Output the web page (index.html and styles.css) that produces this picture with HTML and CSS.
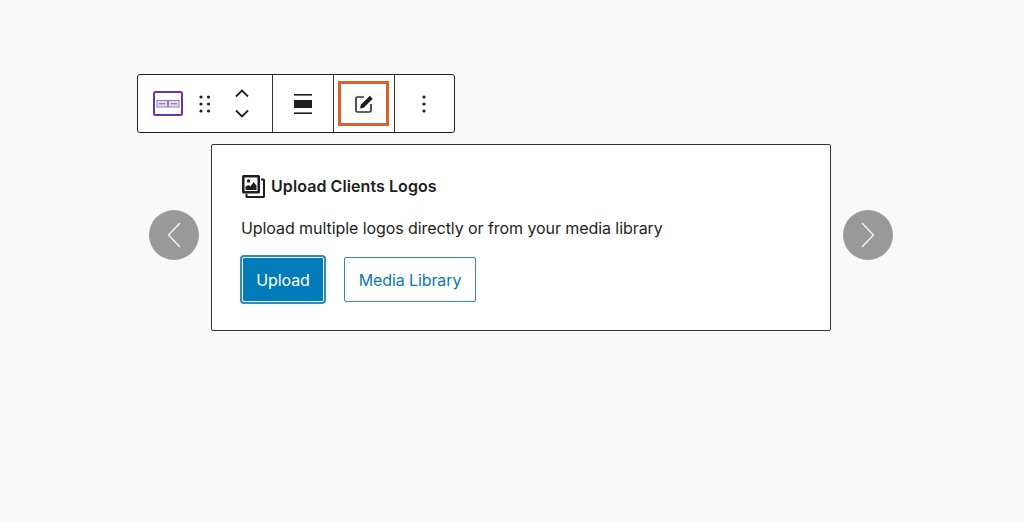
FILE: index.html
```html
<!DOCTYPE html>
<html lang="en">
<head>
    <meta charset="UTF-8">
    <title>Upload Clients Logos</title>
    <link rel="stylesheet" href="styles.css">
</head>
<body>
<div class="toolbar">
    <div class="tool-group tool-group-block">
        <svg class="icon-block" width="30" height="25" viewBox="0 0 30 25">
            <rect x="1" y="1" width="28" height="23" rx="1.500" fill="none" stroke="#6a34b0" stroke-width="2"/>
            <rect x="4" y="9.500" width="10.500" height="6.500" fill="#e3dcec" stroke="#8f7db0"/>
            <rect x="15.500" y="9.500" width="10.500" height="6.500" fill="#e3dcec" stroke="#8f7db0"/>
            <path d="M6 12.800h6.500M17.500 12.800h6.500" stroke="#7d68a8"/>
        </svg>
        <svg class="icon-drag" width="12" height="18" viewBox="0 0 12 18" fill="#1e1e1e">
            <circle cx="2" cy="2" r="1.600"/><circle cx="9.500" cy="2" r="1.600"/>
            <circle cx="2" cy="9" r="1.600"/><circle cx="9.500" cy="9" r="1.600"/>
            <circle cx="2" cy="16" r="1.600"/><circle cx="9.500" cy="16" r="1.600"/>
        </svg>
        <div class="movers">
            <svg width="14" height="9" viewBox="0 0 14 9"><path d="M1 7.500l6-6 6 6" fill="none" stroke="#1e1e1e" stroke-width="1.800"/></svg>
            <svg width="14" height="9" viewBox="0 0 14 9"><path d="M1 1.500l6 6 6-6" fill="none" stroke="#1e1e1e" stroke-width="1.800"/></svg>
        </div>
    </div>
    <div class="tool-group">
        <svg width="18" height="20" viewBox="0 0 18 20" fill="#1e1e1e">
            <rect x="0" y="0" width="18" height="1.600"/>
            <rect x="0" y="6" width="18" height="8"/>
            <rect x="0" y="18.400" width="18" height="1.600"/>
        </svg>
    </div>
    <div class="tool-group">
        <div class="edit-highlight">
            <svg width="20" height="20" viewBox="0 0 20 20" fill="none">
                <path d="M10 3H3.500A1.500 1.500 0 0 0 2 4.500v12A1.500 1.500 0 0 0 3.500 18h12a1.500 1.500 0 0 0 1.500-1.500V10" stroke="#333" stroke-width="1.700"/>
                <path d="M6 14.500l.8-3.700L15.800 1.800l2.900 2.900-9 9z" fill="#1e1e1e"/>
            </svg>
        </div>
    </div>
    <div class="tool-group tool-group-last">
        <svg width="4" height="18" viewBox="0 0 4 18" fill="#1e1e1e">
            <circle cx="2" cy="2" r="1.600"/><circle cx="2" cy="9" r="1.600"/><circle cx="2" cy="16" r="1.600"/>
        </svg>
    </div>
</div>

<div class="carousel">
    <div class="arrow">
        <svg width="14" height="26" viewBox="0 0 14 26"><path d="M13 1L1.500 13 13 25" fill="none" stroke="#f2f2f2" stroke-width="1.500"/></svg>
    </div>
    <div class="placeholder">
        <div class="placeholder-title">
            <svg class="icon-logos" width="23" height="23" viewBox="0 0 23 23">
                <path d="M19 4.500h2.500a.5.500 0 0 1 .5.500V21.500a.5.500 0 0 1-.5.500H5a.5.500 0 0 1-.5-.500V19" fill="none" stroke="#1e1e1e" stroke-width="2"/>
                <rect x="0" y="0" width="18" height="18.500" rx="1.500" fill="#1e1e1e"/>
                <path d="M2.500 16V2.500h13V16z" fill="#fff"/>
                <circle cx="6.500" cy="6" r="1.700" fill="#1e1e1e"/>
                <path d="M3.500 15v-3.500l3-1.500 2 1.500 3-4.500 3 3.500V15z" fill="#1e1e1e"/>
            </svg>
            <strong>Upload Clients Logos</strong>
        </div>
        <p class="placeholder-text">Upload multiple logos directly or from your media library</p>
        <div class="placeholder-buttons">
            <button class="btn btn-primary">Upload</button>
            <button class="btn btn-secondary">Media Library</button>
        </div>
    </div>
    <div class="arrow">
        <svg width="14" height="26" viewBox="0 0 14 26"><path d="M1 1l11.500 12L1 25" fill="none" stroke="#f2f2f2" stroke-width="1.500"/></svg>
    </div>
</div>
</body>
</html>
```

FILE: styles.css
```css
/* reset */
body,div,p,button{margin:0;padding:0}
html,body{width:100%;height:100%}
body{
    background:#f9f9f9;
    font-family:Inter,'Liberation Sans',sans-serif;
    font-size:16px;
    color:#1e1e1e;
    padding-top:74px;
    box-sizing:border-box;
    overflow:hidden;
}
/* //reset */
.toolbar{
    display:flex;
    width:318px;
    height:59px;
    margin-left:137px;
    box-sizing:border-box;
    background:#fff;
    border:1px solid #1e1e1e;
    border-radius:3px;
}
.tool-group{
    display:flex;
    flex:none;
    width:61px;
    align-items:center;
    justify-content:center;
    box-sizing:border-box;
    border-left:1px solid #333;
}
.tool-group-block{
    width:134px;
    border-left:0;
    justify-content:flex-start;
    padding-left:15px;
}
.tool-group-last{
    flex:1;
    width:auto;
    padding-right:1px;
}
.icon-block{
    margin-right:16px;
}
.icon-drag{
    margin-right:24px;
}
.movers{
    display:flex;
    flex-direction:column;
    gap:11px;
}
.edit-highlight{
    display:flex;
    width:51px;
    height:45px;
    margin-right:1px;
    align-items:center;
    justify-content:center;
    box-sizing:border-box;
    border:3px solid #d8622a;
}
.carousel{
    display:flex;
    align-items:flex-start;
    gap:12px;
    margin:11px 0 0 149px;
}
.arrow{
    display:flex;
    flex:none;
    width:50px;
    height:50px;
    margin-top:66px;
    align-items:center;
    justify-content:center;
    border-radius:50%;
    background:#999;
}
.placeholder{
    flex:none;
    width:620px;
    height:187px;
    padding:29px 29px 0;
    box-sizing:border-box;
    background:#fff;
    border:1px solid #333;
    border-radius:2px;
}
.placeholder-title{
    display:flex;
    align-items:center;
    gap:6px;
    height:24px;
    font-size:16px;
    letter-spacing:.08px;
}
.placeholder-title strong{
    font-weight:600;
}
.icon-logos{
    margin-left:1px;
}
.placeholder-text{
    margin-top:18px;
    line-height:24px;
    font-size:16px;
    letter-spacing:-.07px;
}
.placeholder-buttons{
    display:flex;
    align-items:center;
    gap:20px;
    margin:17px 0 0 1px;
}
.btn{
    height:45px;
    box-sizing:border-box;
    font-family:inherit;
    font-size:16px;
    letter-spacing:-.1px;
    border-radius:2px;
}
.btn-primary{
    width:82px;
    background:#007cba;
    color:#fff;
    border:1px solid #fff;
    box-shadow:0 0 0 2px #2b8cbd;
}
.btn-secondary{
    width:132px;
    background:#fff;
    color:#0a78ae;
    border:1px solid #2f8ab8;
}
```
